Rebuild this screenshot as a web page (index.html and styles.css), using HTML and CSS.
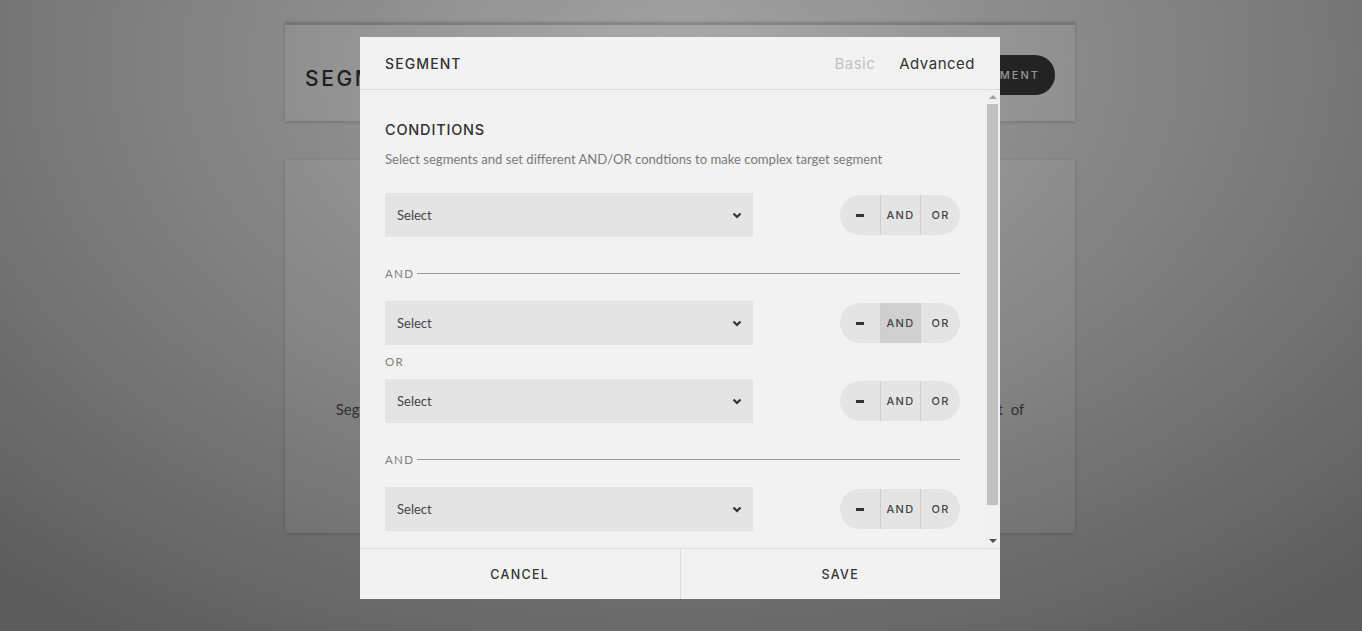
FILE: index.html
```html
<!DOCTYPE html>
<html lang="en">
<head>
<meta charset="utf-8">
<title>Segment</title>
<link rel="stylesheet" href="styles.css">
</head>
<body>
<div class="page">
  <header class="topbar">
    <h1 class="page-title">SEGMENTS</h1>
    <button class="create-btn">CREATE SEGMENT</button>
  </header>
  <section class="empty-card">
    <p class="empty-text">Segments let you group your audience by behaviour and send messages to a specific segment of</p>
  </section>
</div>

<div class="overlay"></div>

<div class="modal">
  <div class="modal-head">
    <div class="modal-title">SEGMENT</div>
    <div class="tabs">
      <span class="tab">Basic</span>
      <span class="tab tab-active">Advanced</span>
    </div>
  </div>

  <div class="modal-main">
    <div class="modal-body">
      <h2 class="section-title">CONDITIONS</h2>
      <p class="section-desc">Select segments and set different AND/OR condtions to make complex target segment</p>

      <div class="cond-row">
        <div class="select"><span>Select</span><svg class="chev" width="10" height="7" viewBox="0 0 10 7"><polyline points="1.5,1.5 5,5 8.5,1.5" fill="none" stroke="#333" stroke-width="2.2"/></svg></div>
        <div class="btn-group"><span class="seg"><i class="minus"></i></span><span class="seg">AND</span><span class="seg">OR</span></div>
      </div>

      <div class="sep"><span class="sep-label">AND</span><span class="sep-line"></span></div>

      <div class="cond-row">
        <div class="select"><span>Select</span><svg class="chev" width="10" height="7" viewBox="0 0 10 7"><polyline points="1.5,1.5 5,5 8.5,1.5" fill="none" stroke="#333" stroke-width="2.2"/></svg></div>
        <div class="btn-group"><span class="seg"><i class="minus"></i></span><span class="seg seg-active">AND</span><span class="seg">OR</span></div>
      </div>

      <div class="sep sep-or"><span class="sep-label">OR</span></div>

      <div class="cond-row">
        <div class="select"><span>Select</span><svg class="chev" width="10" height="7" viewBox="0 0 10 7"><polyline points="1.5,1.5 5,5 8.5,1.5" fill="none" stroke="#333" stroke-width="2.2"/></svg></div>
        <div class="btn-group"><span class="seg"><i class="minus"></i></span><span class="seg">AND</span><span class="seg">OR</span></div>
      </div>

      <div class="sep"><span class="sep-label">AND</span><span class="sep-line"></span></div>

      <div class="cond-row">
        <div class="select"><span>Select</span><svg class="chev" width="10" height="7" viewBox="0 0 10 7"><polyline points="1.5,1.5 5,5 8.5,1.5" fill="none" stroke="#333" stroke-width="2.2"/></svg></div>
        <div class="btn-group"><span class="seg"><i class="minus"></i></span><span class="seg">AND</span><span class="seg">OR</span></div>
      </div>
    </div>

    <div class="scrollbar">
      <div class="sb-btn"><svg width="8" height="4" viewBox="0 0 8 4"><polygon points="0,4 4,0 8,4" fill="#a3a3a3"/></svg></div>
      <div class="sb-track"><div class="sb-thumb"></div></div>
      <div class="sb-btn"><svg width="8" height="4" viewBox="0 0 8 4"><polygon points="0,0 8,0 4,4" fill="#505050"/></svg></div>
    </div>
  </div>

  <div class="modal-foot">
    <button class="foot-btn">CANCEL</button>
    <button class="foot-btn foot-save">SAVE</button>
  </div>
</div>
</body>
</html>
```
FILE: styles.css
```css
* { box-sizing: border-box; }
html, body { margin: 0; height: 100%; }
body {
  background: #e6e6e6;
  font-family: "Lato", "Liberation Sans", sans-serif;
  overflow: hidden;
}
.page {
  width: 790px;
  margin: 0 auto;
  padding-top: 22px;
  position: relative;
  left: -1px;
}
.topbar {
  height: 99px;
  border-top: 3px solid #c4c4c4;
  background: #f0f0f0;
  box-shadow: 0 1px 4px rgba(0,0,0,0.18);
  display: flex;
  align-items: center;
  justify-content: space-between;
  padding: 10px 20px 0 20px;
}
.page-title {
  margin: 0;
  font-family: "Inter", "DejaVu Sans", sans-serif;
  font-weight: 500;
  font-size: 21px;
  letter-spacing: 2.6px;
  color: #333;
}
.create-btn {
  height: 40px;
  margin-top: -6px;
  padding: 0 15px 0 22px;
  border: none;
  border-radius: 20px;
  background: #3a3a3a;
  color: #f0f0f0;
  font-family: "Inter", "DejaVu Sans", sans-serif;
  font-size: 11px;
  font-weight: 500;
  letter-spacing: 2px;
}
.empty-card {
  margin-top: 39px;
  height: 373px;
  background: #f0f0f0;
  box-shadow: 0 1px 4px rgba(0,0,0,0.18);
  padding: 240px 40px 0;
}
.empty-text {
  margin: 0;
  font-size: 15px;
  color: #5a5a5a;
  text-align: center;
  word-spacing: 4px;
  white-space: nowrap;
}
.overlay {
  position: fixed;
  inset: 0;
  background: radial-gradient(ellipse 75% 110% at 50% 10%, rgba(0,0,0,0.29) 0%, rgba(0,0,0,0.45) 55%, rgba(0,0,0,0.60) 100%);
}
.modal {
  position: fixed;
  left: 360px;
  top: 37px;
  width: 640px;
  height: 562px;
  background: #f2f2f2;
  display: flex;
  flex-direction: column;
}
.modal-head {
  height: 53px;
  flex: none;
  border-bottom: 1px solid #dcdcdc;
  display: flex;
  align-items: center;
  justify-content: space-between;
  padding: 0 25px;
}
.modal-title {
  font-family: "Inter", "DejaVu Sans", sans-serif;
  font-weight: 500;
  font-size: 14px;
  letter-spacing: 1.1px;
  color: #333;
}
.tabs { display: flex; gap: 24px; }
.tab {
  font-family: "Inter", "DejaVu Sans", sans-serif;
  font-size: 15px;
  letter-spacing: 0.5px;
  color: #c2c2c2;
}
.tab-active { color: #333; }
.modal-main {
  flex: 1;
  min-height: 0;
  display: flex;
}
.modal-body {
  flex: 1;
  overflow: hidden;
  padding: 31px 25px 50px 25px;
}
.scrollbar {
  width: 15px;
  flex: none;
  background: #f1f1f1;
  display: flex;
  flex-direction: column;
}
.sb-btn {
  height: 14px;
  flex: none;
  display: flex;
  align-items: center;
  justify-content: center;
}
.sb-btn svg { display: block; }
.sb-track {
  flex: 1;
  padding: 0 2px;
}
.sb-thumb {
  height: 401px;
  background: #c1c1c1;
}
.section-title {
  margin: 0;
  height: 18px;
  line-height: 18px;
  font-family: "Inter", "DejaVu Sans", sans-serif;
  font-weight: 500;
  font-size: 14.5px;
  letter-spacing: 0.8px;
  color: #333;
}
.section-desc {
  margin: 11px 0 25px;
  height: 18px;
  line-height: 18px;
  font-size: 13.1px;
  color: #7a7a7a;
}
.cond-row {
  height: 44px;
  display: flex;
  align-items: center;
  justify-content: space-between;
}
.select {
  width: 368px;
  height: 44px;
  background: #e4e4e4;
  display: flex;
  align-items: center;
  justify-content: space-between;
  padding: 0 11px 0 12px;
  font-size: 13px;
  color: #444;
}
.chev { display: block; }
.btn-group {
  width: 120px;
  height: 40px;
  border-radius: 20px;
  background: #e4e4e4;
  overflow: hidden;
  display: flex;
}
.seg {
  width: 40px;
  display: flex;
  align-items: center;
  justify-content: center;
  font-family: "Inter", "DejaVu Sans", sans-serif;
  font-size: 11px;
  font-weight: 500;
  letter-spacing: 1.3px;
  color: #444;
}
.seg + .seg { border-left: 1px solid #cdcdcd; }
.seg-active { background: #d0d0d0; }
.minus {
  display: block;
  width: 8px;
  height: 3px;
  background: #333;
  margin-top: 1px;
}
.sep {
  height: 16px;
  margin: 28px 0 20px;
  display: flex;
  align-items: center;
}
.sep-or { margin: 8px 0 10px; }
.sep-label {
  font-size: 11.5px;
  letter-spacing: 1.3px;
  color: #808080;
}
.sep-line {
  flex: 1;
  height: 1px;
  background: #9a9a9a;
  margin-left: 3px;
}
.modal-foot {
  height: 51px;
  flex: none;
  border-top: 1px solid #dcdcdc;
  display: flex;
}
.foot-btn {
  flex: 1;
  border: none;
  background: transparent;
  font-family: "Inter", "DejaVu Sans", sans-serif;
  font-size: 12.5px;
  font-weight: 500;
  letter-spacing: 1.3px;
  color: #333;
  padding: 0;
}
.foot-save { border-left: 1px solid #dcdcdc; }
```
